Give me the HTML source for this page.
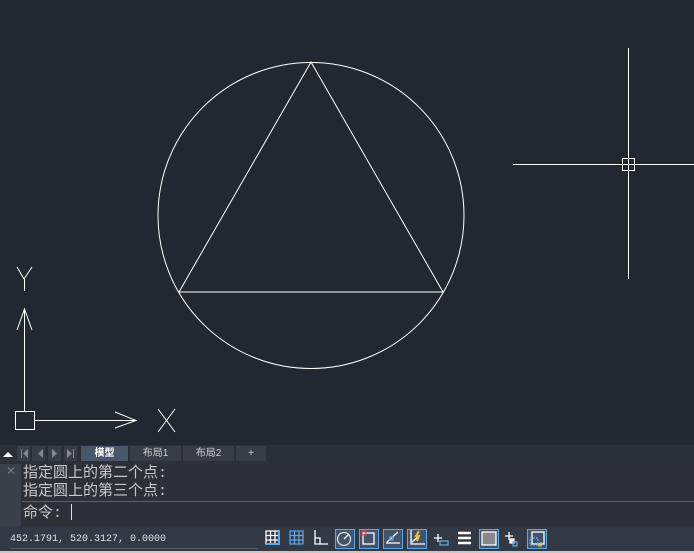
<!DOCTYPE html>
<html><head><meta charset="utf-8"><style>
*{margin:0;padding:0;box-sizing:border-box}
body{width:694px;height:553px;background:#222831;position:relative;overflow:hidden;font-family:"Liberation Sans","Noto Sans CJK SC",sans-serif}
.abs{position:absolute}
.tab{position:absolute;top:446px;height:15px;background:#393d45;color:#d0d0d0;font-size:10px;text-align:center;line-height:15px}
.cmd{position:absolute;left:23px;color:#c8c8c8;font-size:15px;line-height:17px;font-family:"Liberation Mono","Noto Sans CJK SC",monospace}
.btn{position:absolute;top:529px;width:20px;height:20px;border:1px solid #5aa9e6;background:#44536a}
</style></head><body>
<svg class="abs" style="left:0;top:0" width="694" height="445">
<g stroke="#fff" stroke-width="1" fill="none">
<circle cx="311" cy="215.5" r="153"/>
<polygon points="311,62 179,292 443,292"/>
<line x1="628.5" y1="48" x2="628.5" y2="279"/>
<line x1="513" y1="164.5" x2="694" y2="164.5"/>
<rect x="622.5" y="158.5" width="12" height="12"/>
<line x1="17" y1="267" x2="24" y2="279"/><line x1="32" y1="267" x2="24" y2="279"/><line x1="24.5" y1="279" x2="24.5" y2="291"/>
<line x1="24.5" y1="309" x2="24.5" y2="411"/>
<polyline points="17,330 24.5,309 32,330"/>
<rect x="15.5" y="411.5" width="19" height="18"/>
<line x1="34" y1="420.5" x2="136" y2="420.5"/>
<polyline points="115,412 136,420.5 115,428"/>
<line x1="158" y1="409" x2="175" y2="432"/><line x1="175" y1="409" x2="158" y2="432"/>
</g></svg>
<div class="abs" style="left:0;top:445px;width:694px;height:17px;background:#2b2f36"></div>
<svg class="abs" style="left:0;top:445px" width="80" height="17">
<polygon points="3,12 8,7 13,12" fill="#fff"/>
<rect x="17" y="1" width="13" height="15" fill="#393d45"/><rect x="32" y="1" width="13" height="15" fill="#393d45"/><rect x="48" y="1" width="13" height="15" fill="#393d45"/><rect x="64" y="1" width="13" height="15" fill="#393d45"/>
<rect x="21" y="4" width="1" height="9" fill="#888"/><polygon points="28,4 23,8.5 28,13" fill="#888"/>
<polygon points="43,4 38,8.5 43,13" fill="#888"/>
<polygon points="52,4 57,8.5 52,13" fill="#888"/>
<polygon points="67,4 72,8.5 67,13" fill="#888"/><rect x="73" y="4" width="1" height="9" fill="#888"/>
</svg>
<div class="tab" style="left:81px;width:47px;background:#4a5669;color:#fff;font-weight:bold">模型</div>
<div class="tab" style="left:130px;width:51px">布局1</div>
<div class="tab" style="left:183px;width:51px">布局2</div>
<div class="tab" style="left:236px;width:30px">+</div>
<div class="abs" style="left:0;top:462px;width:694px;height:64px;background:#2d3036"></div>
<div class="abs" style="left:0;top:464px;width:21px;height:62px;background:#3b404b"></div>
<div class="abs" style="left:6px;top:464px;color:#777;font-size:12px">✕</div>
<div class="abs" style="left:22px;top:501px;width:672px;height:1px;background:#5a616c"></div>
<div class="cmd" style="top:465px">指定圆上的第二个点:</div>
<div class="cmd" style="top:483px">指定圆上的第三个点:</div>
<div class="cmd" style="top:504px">命令: <span style="display:inline-block;width:1px;height:16px;background:#ddd;vertical-align:-3px"></span></div>
<div class="abs" style="left:0;top:526px;width:694px;height:25px;background:#323844"></div>
<div class="abs" style="left:0;top:551px;width:694px;height:2px;background:#c8c8c8"></div>
<div class="abs" style="left:10px;top:534px;color:#e0e0e0;font-size:10px;font-family:'Liberation Mono',monospace">452.1791, 520.3127, 0.0000</div>
<div class="abs" style="left:10px;top:548px;width:248px;height:1px;background:#555c66"></div>
<div class="btn" style="left:335px"></div><div class="btn" style="left:359px"></div><div class="btn" style="left:383px"></div><div class="btn" style="left:407px"></div><div class="btn" style="left:479px"></div><div class="btn" style="left:527px"></div>
<svg class="abs" style="left:260px;top:526px" width="300" height="25" fill="none" stroke="#fff" stroke-width="1.3">
<path d="M6,5h13v13h-13z M6,9.5h13 M6,14h13 M10.5,5v13 M15,5v13" /><path d="M19,5v13h-13" stroke="#5aa9e6" stroke-width="2"/>
<path d="M30,5h13v13h-13z M30,9.5h13 M30,14h13 M34.5,5v13 M39,5v13" stroke="#5aa9e6"/>
<path d="M55,4v14h13 M55,12h5v6" />
<circle cx="84" cy="13" r="6.5" stroke="#ddd"/><path d="M84,13l5,-5"/>
<rect x="103" y="7" width="11" height="11"/><rect x="102" y="5" width="4" height="4" stroke="#e04848"/>
<path d="M126,17h14 M127,16l11,-10"/><rect x="130" y="11" width="3" height="3" stroke="#5aa9e6"/>
<path d="M151,4v14h14 M152,16l7,-6"/><path d="M159,5l-3,5h3l-2,5" stroke="#f0c030" stroke-width="2"/>
<path d="M174,12h8 M178,8v8"/><rect x="180" y="15" width="8" height="4" stroke="#5aa9e6"/>
<path d="M198,7h13 M198,12h13 M198,17h13" stroke-width="2.5"/>
<rect x="222" y="6" width="14" height="13" fill="#888" stroke="#fff"/>
<path d="M245,10h8 M249,6v8"/><rect x="250" y="13" width="4" height="4" fill="#fff"/><rect x="253" y="16" width="4" height="4" stroke="#5aa9e6"/>
<rect x="272" y="6" width="12" height="12"/><rect x="270" y="12" width="8" height="7" stroke="#5aa9e6" stroke-dasharray="2 1"/><path d="M281,16v4h-3" stroke="#f0c030"/>
</svg>
</body></html>
